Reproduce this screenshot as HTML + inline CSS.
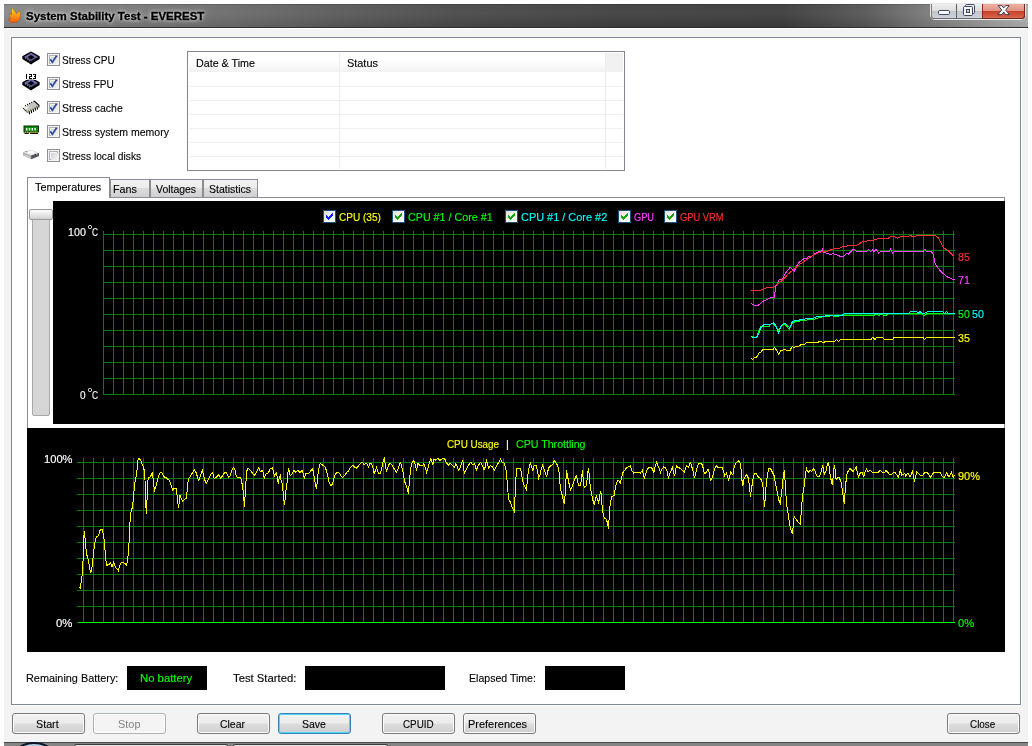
<!DOCTYPE html>
<html><head><meta charset="utf-8"><title>System Stability Test - EVEREST</title><style>
html,body{margin:0;padding:0}
body{width:1032px;height:746px;background:#fff;position:relative;overflow:hidden;font-family:"Liberation Sans",sans-serif;font-size:11px;color:#000}
.a{position:absolute}
.t{position:absolute;white-space:nowrap;line-height:14px;height:14px;transform-origin:0 0;font-size:11px}
.b{font-weight:bold}
#tb{left:4px;top:4px;width:1024px;height:23px;box-shadow:inset 0 1px 0 rgba(0,0,0,.15);background:linear-gradient(rgba(255,255,255,.04),rgba(255,255,255,.06) 40%,rgba(0,0,0,.05) 100%),linear-gradient(to right,#878787 0%,#7c7c7c 10%,#6a6a6a 22%,#595959 32%,#484848 44%,#3e3e3e 60%,#3b3b3b 76%,#545454 84%,#7e7e7e 91%,#9a9a9a 96%,#adadad 100%)}
#tbl{left:4px;top:27px;width:1024px;height:1px;background:#2e2e2e}
#cl{left:4px;top:29px;width:1024px;height:713px;background:#f3f3f3}
#pn{left:11px;top:37px;width:1010px;height:668px;background:#fff;border:1px solid #828796;box-sizing:border-box;box-shadow:1px 1px 0 #fff}
.btn{position:absolute;top:713px;width:73px;height:21px;box-sizing:border-box;border:1px solid #7a7a7a;border-radius:3px;background:linear-gradient(#f2f2f2 0%,#ebebeb 48%,#dddddd 52%,#cfcfcf 100%);box-shadow:inset 0 0 0 1px #fcfcfc}
.btn.dis{border-color:#adb2b5;background:#f4f4f4;box-shadow:inset 0 0 0 1px #fcfcfc}
.btn.def{border-color:#3c7fb1;box-shadow:inset 0 0 0 1px #48d8fb}
.cb{position:absolute;width:13px;height:13px;box-sizing:border-box;border:1px solid #8e8f8f;background:#f4f4f4;box-shadow:inset 0 0 0 1px #f4f4f4, inset 0 0 0 2px #aeb3b9;}
.cb i{position:absolute;left:3px;top:3px;width:7px;height:7px;background:linear-gradient(135deg,#d1d4d8,#f4f5f6)}
.lcb{position:absolute;width:13px;height:13px;top:210px;box-sizing:border-box;border:1px solid #1c5180;background:linear-gradient(135deg,#dcdcd7,#f3f3ef 50%,#fff 100%)}
.bk{position:absolute;background:#000}

</style></head><body>
<div class="a" id="tb"></div><div class="a" id="tbl"></div><div class="a" id="cl"></div>
<div class="a" id="pn"></div>
<div class="a" style="left:4px;top:742px;width:1024px;height:1px;background:#484848"></div>
<div class="a" style="left:4px;top:743px;width:1024px;height:3px;background:#858585"></div>
<div class="a" style="left:5.5px;top:741.6px;width:56px;height:56px;border-radius:50%;background:#b9cfe2;border:2.2px solid #0a1626;box-sizing:border-box"></div>
<div class="a" style="left:74px;top:744px;width:154px;height:4px;box-sizing:border-box;border:1px solid #3a3a3a;border-radius:2px;background:#e4e4e4"></div>
<div class="a" style="left:233px;top:744px;width:155px;height:4px;box-sizing:border-box;border:1px solid #3a3a3a;border-radius:2px;background:#e4e4e4"></div>

<div class="a" style="left:930px;top:3px;width:96px;height:17px;box-sizing:border-box;border:1px solid #e9e9e9;border-radius:0 0 5px 5px;background:#555"></div>
<div class="a" style="left:931px;top:4px;width:25px;height:15px;border-radius:0 0 0 4px;background:linear-gradient(#eeeeee 0%,#dedede 45%,#c2c5cc 50%,#cfd2d9 100%);box-shadow:inset 1px 0 0 #7a7a7a, inset 0 -1px 0 #6a6d78"></div>
<div class="a" style="left:956px;top:4px;width:1px;height:15px;background:#5d5f66"></div>
<div class="a" style="left:957px;top:4px;width:25px;height:15px;background:linear-gradient(#eeeeee 0%,#dedede 45%,#c2c5cc 50%,#cfd2d9 100%);box-shadow:inset 0 -1px 0 #6a6d78"></div>
<div class="a" style="left:982px;top:4px;width:43px;height:15px;border-radius:0 0 4px 0;background:linear-gradient(#eeb0a2 0%,#e09484 45%,#c8412b 50%,#d35f43 85%,#e08a62 100%);box-shadow:inset 1px 0 0 #8a2a1c, inset -1px 0 0 #7a2216, inset 0 -1px 0 #70241a"></div>
<svg class="a" style="left:930px;top:3px" width="96" height="18" viewBox="930 3 96 18">
<rect x="938.5" y="10.5" width="11" height="4" rx="1.2" fill="#f8f8f8" stroke="#3e4560" stroke-width="1"/>
<rect x="965.5" y="4.5" width="9" height="9" rx="1.2" fill="#eef0f3" stroke="#3e4560" stroke-width="1"/>
<rect x="963.5" y="6.5" width="9" height="9" rx="1.2" fill="#f8f8f8" stroke="#3e4560" stroke-width="1"/>
<rect x="966.5" y="9.5" width="3" height="3" fill="#d0d3da" stroke="#3e4560" stroke-width="1"/>
<path d="M998.2 5.6L1001.8 5.6L1003.7 7.9L1005.6 5.6L1009.2 5.6L1005.7 10L1009.4 14.6L1005.7 14.6L1003.7 12.1L1001.7 14.6L998 14.6L1001.7 10Z" fill="#fafafa" stroke="#3b3f55" stroke-width="1" stroke-linejoin="round"/>
</svg>


<svg class="a" style="left:0;top:0" width="60" height="170" viewBox="0 0 60 170">
<!-- flame -->
<defs><linearGradient id="fl" x1="0" y1="0" x2="0" y2="1"><stop offset="0" stop-color="#ffe61e"/><stop offset="0.45" stop-color="#ffa21a"/><stop offset="1" stop-color="#f25a0a"/></linearGradient></defs>
<path d="M12.2 7.6C13.5 10 15.6 11.4 16.4 14C17.6 13 18.6 11.6 19.4 10.6C20.6 13.5 21 17 19.4 19.8C17.8 22.4 14 23.3 11.3 22.2C9.4 21.5 8.4 20.3 8.7 18.6C9.4 19.3 10.2 19.3 10.6 18.8C9.6 16.8 9.4 15 10 13.4C10.6 14.2 11.2 14.8 11.8 15C11.2 12.5 11.4 10 12.2 7.6Z" fill="url(#fl)" stroke="#8a3a10" stroke-opacity=".55" stroke-width=".6"/>
<!-- cpu -->
<defs><clipPath id="cl2"><rect x="20" y="53.8" width="24" height="14"/></clipPath></defs>
<g id="chip">
<path d="M31 51.5L34 53L39.7 56.2L39.7 59L34 62.6L31 64.5L28 62.6L22.3 59L22.3 56.2L28 53Z" fill="#000"/>
<path d="M31 53L37.8 57L31 61.3L24.2 57Z" fill="#5c5c92"/>
<path d="M31 53L37.8 57L36 58L31 54.6L26 58L24.2 57Z" fill="#6d6da6"/>
<path d="M31 54.9L34.4 57.2L31 59.6L27.6 57.2Z" fill="#000"/>
<path d="M25 58L30.6 61.6" stroke="#c8c8e6" stroke-width=".8" stroke-dasharray="0.9 1.5"/>
</g>
<g clip-path="url(#cl2)" transform="translate(0,26)"><use href="#chip"/></g>
<!-- 123 -->
<path shape-rendering="crispEdges" fill="#000" d="M26 74h1v5h-1zM29 74h3v1h-3zM31 75h1v1h-1zM29 76h3v1h-3zM29 77h1v1h-1zM29 78h3v1h-3zM33 74h3v1h-3zM35 75h1v1h-1zM34 76h2v1h-2zM35 77h1v1h-1zM33 78h3v1h-3z"/>
<!-- cache chip -->
<path d="M23.2 108.2L34 101.4L38.8 105.6L27.8 112.8Z" fill="#c4c4c4"/>
<path d="M23.6 108.3L27 106.2L28.6 107.6L25.2 109.9Z" fill="#f2f2f2"/>
<path d="M23.2 108.2L27.8 112.9" stroke="#000" stroke-width="1.1" stroke-dasharray="1 .55"/>
<path d="M33.4 101.4H34.6L38.9 105.3V107.6" stroke="#000" stroke-width="1.1" fill="none"/>
<path d="M25.5 105.6h.01M27.6 104.4h.01M29.6 103.4h.01M31.7 102.4h.01" stroke="#000" stroke-width="1.3" stroke-linecap="round"/>
<path d="M25.6 106.6h.01M27.7 105.4h.01M29.7 104.4h.01M31.8 103.4h.01M28.6 110.6h.01M30.6 109.4h.01M32.6 108.2h.01M34.6 107h.01M36.6 105.9h.01" stroke="#b4a63a" stroke-width="1" stroke-linecap="round"/>
<path d="M29.2 111.6L29.6 113.8M31.1 110.4L31.6 112.6M33.1 109.2L33.6 111.5M35.1 108L35.6 110.2M37 106.9L37.5 109" stroke="#000" stroke-width="1.15" stroke-linecap="round"/>
<!-- memory -->
<rect x="24" y="126" width="14.5" height="6" fill="#0a8a0a" stroke="#0a2a0a" stroke-width="1"/>
<path d="M24.5 133.2H28.8M30.2 133.2H38" stroke="#111" stroke-width="1.6"/>
<path d="M25 132.2H28.5M30.5 132.2H37.6" stroke="#ffe600" stroke-width="1" stroke-dasharray="1.3 .7"/>
<path d="M26.7 128V130.6M29.5 128V130.6M32.3 128V130.6M35.1 128V130.6" stroke="#fff" stroke-width="1.4"/>
<!-- disk -->
<path d="M23 152L31 150.1L39 153L39 156L31.2 159.2L23 155.6Z" fill="#b3b3b6"/>
<path d="M23 152L31 150.1L39 153L31.2 155.5Z" fill="#e6e6e8"/>
<ellipse cx="31" cy="152.4" rx="3.4" ry="1.3" fill="#fbfbfb"/>
<ellipse cx="26.6" cy="151.6" rx="1.2" ry=".5" fill="#8c8c8c"/>
<path d="M31.2 155.5L39 153V156L31.2 159.2Z" fill="#54545e"/>
<path d="M24.5 155L29.8 157.3" stroke="#e4e4e4" stroke-width=".8"/>
<path d="M35.2 154.9L36 154.6" stroke="#15151c" stroke-width="1.3"/>
<path d="M36.4 154.7L37.4 154.3" stroke="#b8b8ff" stroke-width="1.3"/>
</svg>

<div class="a" style="left:187px;top:51px;width:438px;height:120px;box-sizing:border-box;border:1px solid #828790;background:#fff"></div>
<div class="a" style="left:189px;top:53px;width:434px;height:19px;background:linear-gradient(#fff 0%,#fff 40%,#f2f2f2 100%)"></div>
<div class="a" style="left:606px;top:53px;width:17px;height:19px;background:#f1f1f1"></div>
<div class="a" style="left:189px;top:86px;width:434px;height:1px;background:#f0f0f0"></div>
<div class="a" style="left:189px;top:100px;width:434px;height:1px;background:#f0f0f0"></div>
<div class="a" style="left:189px;top:114px;width:434px;height:1px;background:#f0f0f0"></div>
<div class="a" style="left:189px;top:128px;width:434px;height:1px;background:#f0f0f0"></div>
<div class="a" style="left:189px;top:142px;width:434px;height:1px;background:#f0f0f0"></div>
<div class="a" style="left:189px;top:156px;width:434px;height:1px;background:#f0f0f0"></div>
<div class="a" style="left:339px;top:53px;width:1px;height:116px;background:#ededed"></div>
<div class="a" style="left:605px;top:53px;width:1px;height:116px;background:#ededed"></div>
<div class="a" style="left:27px;top:197px;width:978px;height:455px;box-sizing:border-box;border:1px solid #898c95;background:#fff"></div>
<div class="a" style="left:110px;top:179px;width:40px;height:19px;box-sizing:border-box;border:1px solid #898c95;background:linear-gradient(#f2f2f2 0%,#ebebeb 50%,#dddddd 50%,#cfcfcf 100%)"></div>
<div class="a" style="left:150px;top:179px;width:53px;height:19px;box-sizing:border-box;border:1px solid #898c95;background:linear-gradient(#f2f2f2 0%,#ebebeb 50%,#dddddd 50%,#cfcfcf 100%)"></div>
<div class="a" style="left:203px;top:179px;width:55px;height:19px;box-sizing:border-box;border:1px solid #898c95;background:linear-gradient(#f2f2f2 0%,#ebebeb 50%,#dddddd 50%,#cfcfcf 100%)"></div>
<div class="a" style="left:27px;top:177px;width:83px;height:21px;box-sizing:border-box;border:1px solid #898c95;border-bottom:none;background:#fff"></div>
<div class="bk" style="left:53px;top:201px;width:952px;height:223px"></div>
<div class="bk" style="left:27px;top:428px;width:978px;height:224px"></div>
<div class="a" style="left:32px;top:212px;width:18px;height:204px;box-sizing:border-box;border:1px solid #a9a9a9;border-radius:2px;background:#d6d6d6"></div>
<div class="a" style="left:29px;top:209px;width:24px;height:11px;box-sizing:border-box;border:1px solid #9a9a9a;border-radius:2px;background:linear-gradient(#fdfdfd,#e3e3e3 60%,#d0d0d0)"></div>
<svg class="a" style="left:0;top:0" width="1032" height="746" viewBox="0 0 1032 746" shape-rendering="crispEdges">
<path d="M103.5 231V395M113.5 231V395M123.5 231V395M133.5 231V395M143.5 231V395M153.5 231V395M163.5 231V395M173.5 231V395M183.5 231V395M193.5 231V395M203.5 231V395M213.5 231V395M223.5 231V395M233.5 231V395M243.5 231V395M253.5 231V395M263.5 231V395M273.5 231V395M283.5 231V395M293.5 231V395M303.5 231V395M313.5 231V395M323.5 231V395M333.5 231V395M343.5 231V395M353.5 231V395M363.5 231V395M373.5 231V395M383.5 231V395M393.5 231V395M403.5 231V395M413.5 231V395M423.5 231V395M433.5 231V395M443.5 231V395M453.5 231V395M463.5 231V395M473.5 231V395M483.5 231V395M493.5 231V395M503.5 231V395M513.5 231V395M523.5 231V395M533.5 231V395M543.5 231V395M553.5 231V395M563.5 231V395M573.5 231V395M583.5 231V395M593.5 231V395M603.5 231V395M613.5 231V395M623.5 231V395M633.5 231V395M643.5 231V395M653.5 231V395M663.5 231V395M673.5 231V395M683.5 231V395M693.5 231V395M703.5 231V395M713.5 231V395M723.5 231V395M733.5 231V395M743.5 231V395M753.5 231V395M763.5 231V395M773.5 231V395M783.5 231V395M793.5 231V395M803.5 231V395M813.5 231V395M823.5 231V395M833.5 231V395M843.5 231V395M853.5 231V395M863.5 231V395M873.5 231V395M883.5 231V395M893.5 231V395M903.5 231V395M913.5 231V395M923.5 231V395M933.5 231V395M943.5 231V395M953.5 231V395M103 234.5H955M103 250.5H955M103 266.5H955M103 282.5H955M103 298.5H955M103 314.5H955M103 330.5H955M103 346.5H955M103 362.5H955M103 378.5H955M103 394.5H955M83.5 458V623M93.5 458V623M103.5 458V623M113.5 458V623M123.5 458V623M133.5 458V623M143.5 458V623M153.5 458V623M163.5 458V623M173.5 458V623M183.5 458V623M193.5 458V623M203.5 458V623M213.5 458V623M223.5 458V623M233.5 458V623M243.5 458V623M253.5 458V623M263.5 458V623M273.5 458V623M283.5 458V623M293.5 458V623M303.5 458V623M313.5 458V623M323.5 458V623M333.5 458V623M343.5 458V623M353.5 458V623M363.5 458V623M373.5 458V623M383.5 458V623M393.5 458V623M403.5 458V623M413.5 458V623M423.5 458V623M433.5 458V623M443.5 458V623M453.5 458V623M463.5 458V623M473.5 458V623M483.5 458V623M493.5 458V623M503.5 458V623M513.5 458V623M523.5 458V623M533.5 458V623M543.5 458V623M553.5 458V623M563.5 458V623M573.5 458V623M583.5 458V623M593.5 458V623M603.5 458V623M613.5 458V623M623.5 458V623M633.5 458V623M643.5 458V623M653.5 458V623M663.5 458V623M673.5 458V623M683.5 458V623M693.5 458V623M703.5 458V623M713.5 458V623M723.5 458V623M733.5 458V623M743.5 458V623M753.5 458V623M763.5 458V623M773.5 458V623M783.5 458V623M793.5 458V623M803.5 458V623M813.5 458V623M823.5 458V623M833.5 458V623M843.5 458V623M853.5 458V623M863.5 458V623M873.5 458V623M883.5 458V623M893.5 458V623M903.5 458V623M913.5 458V623M923.5 458V623M933.5 458V623M943.5 458V623M953.5 458V623M77 462.5H955M77 478.5H955M77 494.5H955M77 510.5H955M77 526.5H955M77 542.5H955M77 558.5H955M77 574.5H955M77 590.5H955M77 606.5H955M77 622.5H955" stroke="#008000" stroke-width="1" fill="none"/>
<path d="M79 622.5H955" stroke="#00ff00" stroke-width="1" fill="none"/>
</svg>
<svg class="a" style="left:0;top:0" width="1032" height="746" viewBox="0 0 1032 746">
<polyline points="751.2,336.5 756.3,337.5 759.1,330.3 761,326.6 763.8,326 769.4,326 771.3,323.8 774.1,324.2 776.9,328.5 778.8,330.3 781.6,325.7 784.4,323.8 787.3,326.6 789.1,329.4 792,323.8 794.8,321.9 799.5,321 807,320 813.4,319.5 818.2,317.8 823.9,316.6 831.4,315.9 837,316.3 842.7,315.3 860.0,315.2 874.1,315.2 876.9,313.9 878.8,315.8 880.6,313.9 885.3,315.8 888.1,313.9 908.8,313.9 921.9,313.9 923.8,315.8 926.6,313.9 954.7,313.9" fill="none" stroke="#00ff00" stroke-width="1" shape-rendering="crispEdges"/>
<polyline points="751.2,336.5 753.5,337.5 756.3,337.5 758.1,335 761,327.5 763.8,324.7 769.4,324.7 773.2,322.8 776,325.7 778.4,333.2 780.7,326.6 783.5,323.4 786.3,324.2 789.7,327.5 792.3,321.9 795.7,320.4 803.4,319.5 807,318.5 813.4,318.1 818.2,316.3 827.6,315.9 833.5,315 842.7,315 844.5,313.4 860.0,313.4 908.8,313.4 910.7,311.5 916.3,311.5 918.2,313.4 920.0,311.5 922.9,313.9 928.5,311.5 942.6,311.5 944.4,313.4 946.3,311.5 948.2,313.4 954.7,313.4" fill="none" stroke="#00ffff" stroke-width="1" shape-rendering="crispEdges"/>
<polyline points="751.2,358.5 752.5,359.5 754.4,357.6 756.6,357.2 759.1,352.9 761,351.9 762.8,349.7 773.2,349.7 774.7,347.2 776.9,351 778.8,354.2 780.7,350.4 784.4,349.7 787.3,350.4 790.1,350.4 792,346.7 794.2,347.2 796.6,346.3 799.5,345.9 801.3,344.4 804.2,344.4 807,342.2 818.2,342.2 820.1,341.2 822.4,342.2 833.3,341.2 835.1,341.2 836.6,339.5 838.3,341.4 840.8,339.5 860.0,339.4 871.3,339.4 872.8,337.2 875.0,339.4 876.9,337.2 882.5,337.2 884.4,339.4 892.8,339.4 894.3,337.2 922.9,337.2 924.4,339.4 926.6,337.2 954.7,337.2" fill="none" stroke="#ffff00" stroke-width="1" shape-rendering="crispEdges"/>
<polyline points="751.2,303.5 754.4,305.4 758.1,305.4 761.9,302.2 764.7,300.3 767.5,299.4 770.4,298 774.1,297.5 776,286.2 778.8,280.2 782.6,278.7 785.4,273.1 790.1,267.4 794.2,271.2 798.5,262.7 801.3,260.9 803.4,259 806,258.6 808.8,256.5 810.7,257.7 813.4,254.3 818.2,252 821.1,251.5 822.4,249 823.5,252.4 827.6,253.4 829.5,254.3 833.3,253.9 837,254.9 840.8,256.5 843.6,256.5 846.4,253.4 848.3,254.3 851.1,251.5 853,249.2 854.9,250 856.7,251.5 860.0,251.5 866.6,251.5 868.4,249.6 870.3,251.5 872.2,249.6 874.1,251.5 875.9,249.2 878.8,253.3 880.6,251.5 889.1,251.5 890.6,249.2 892.8,253.3 894.7,251.5 922.9,251.5 924.7,249.2 926.6,251.5 931.3,251.5 933.2,254.3 935.0,262.7 936.9,266.5 940.7,271.2 946.3,276.4 951.9,279.0 954.7,279.0" fill="none" stroke="#ff40ff" stroke-width="1" shape-rendering="crispEdges"/>
<polyline points="751.2,290.3 760,290.3 763.8,289 766.6,287.5 773.2,287.5 776,284.9 779.7,282.5 783.5,279.1 788.2,274 793.5,269.7 799.5,264.6 803.4,261.8 808.8,258 813.4,254.9 818.2,253 823.5,251.3 827.6,251.3 831.4,249.6 835.1,248.7 839.8,248.3 843.4,246.4 849.2,245.8 853.5,245.3 857.7,244.9 860.0,243.4 862.8,241.5 868.4,240.8 873.1,240.2 876.9,238.9 883.5,238.3 888.1,238.3 891.0,236.4 893.8,236.4 897.5,238.3 901.3,236.4 910.7,235.9 914.4,236.4 917.2,235.5 935.0,235.5 937.9,237.4 940.7,242.1 943.5,247.7 947.2,250.1 950.1,252.4 953.8,256.1" fill="none" stroke="#ff3030" stroke-width="1" shape-rendering="crispEdges"/>
<polyline points="79.4,587.1 80.6,588.3 81.4,578.7 82.2,574.7 82.6,562.6 83.4,559.6 83.6,542.5 84.2,531.4 85.1,538.5 85.5,544.5 86.7,554.6 88.3,559.6 89.5,566.6 90.3,572.7 91.5,570.7 92.7,561.6 93.5,552.6 94.5,545.5 95.5,539.5 96.7,536.5 98.7,535.5 99.9,530.4 101.1,529.4 102.5,530.0 103.4,535.5 104.4,541.5 105.2,552.6 105.8,559.6 106.8,565.2 109.2,564.6 110.4,562.6 112.0,566.6 113.6,562.2 115.2,566.6 116.8,569.0 118.4,570.7 119.6,565.6 121.2,562.6 123.3,562.6 124.9,563.6 126.5,565.2 127.7,559.6 128.5,550.5 129.3,538.5 129.7,526.4 130.5,516.4 131.3,510.3 132.5,507.3 133.3,498.3 134.1,490.2 134.9,482.2 136.1,476.1 137.3,468.1 138.1,459.0 139.3,458.4 141.0,461.1 142.6,465.1 144.2,470.1 145.0,480.2 145.4,490.2 145.8,504.3 146.4,514.3 147.0,500.3 147.4,486.2 148.2,478.2 149.8,477.1 151.4,475.1 152.2,472.5 153.0,478.2 153.8,485.2 154.6,490.2 155.8,487.2 157.0,482.2 158.2,477.1 159.5,473.7 161.1,472.1 162.3,473.1 163.5,476.1 164.7,477.1 165.9,477.1 167.5,479.2 169.1,480.2 170.3,482.2 171.5,486.2 172.7,490.2 173.9,488.6 175.5,488.2 176.3,488.6 177.2,496.2 178.0,504.3 178.4,508.3 179.2,503.3 180.0,495.2 181.2,498.3 182.4,501.3 183.6,500.3 185.2,498.9 186.4,498.3 187.2,490.2 188.0,482.2 188.8,478.2 190.0,477.1 191.6,474.1 193.2,471.7 194.4,470.1 195.7,471.7 196.9,475.1 198.1,479.2 198.9,480.2 200.5,476.1 201.7,472.1 202.5,470.1 203.3,474.1 204.5,479.2 205.0,480.5 206.4,483.2 208.4,479.2 210.4,475.1 212.5,472.4 213.4,475.1 214.2,478.5 216.5,477.1 218.6,475.1 220.6,477.8 222.6,475.8 224.7,472.4 226.4,472.4 227.4,474.4 228.7,477.5 230.5,475.1 231.9,470.4 233.5,467.4 234.6,468.3 235.9,474.4 236.9,477.1 240.0,477.5 241.4,479.8 242.3,485.3 243.3,492.1 243.9,499.5 244.5,506.7 245.0,497.5 245.6,488.0 246.1,479.8 246.5,471.7 248.1,468.3 249.8,469.7 251.8,472.4 254.5,475.5 256.6,471.7 258.6,467.6 260.4,471.7 262.7,470.4 263.6,475.1 264.4,477.8 266.1,473.7 268.5,472.8 270.1,469.0 272.2,468.0 273.5,471.7 274.5,475.8 276.2,472.8 277.2,476.5 278.3,483.6 279.3,477.1 280.3,475.1 281.2,481.2 282.3,483.9 283.0,490.7 283.7,497.5 284.4,504.7 285.3,497.5 286.1,489.3 286.9,483.9 287.5,477.1 288.0,471.7 288.4,468.3 289.1,470.4 290.2,475.8 291.8,474.1 293.9,470.4 295.9,472.4 297.9,470.4 300.0,472.4 302.4,470.4 303.4,475.1 304.3,477.8 306.1,473.1 308.1,473.7 310.1,471.7 312.2,468.7 313.3,471.0 314.2,477.1 315.2,483.2 316.5,488.7 317.1,482.6 317.6,477.1 318.3,471.7 319.2,467.0 320.3,463.3 321.9,464.7 323.7,465.6 325.1,467.0 326.4,470.4 327.8,476.5 329.1,481.9 330.9,485.5 332.5,483.9 333.9,478.5 335.2,474.4 337.3,472.4 339.3,473.1 341.3,476.5 342.7,477.5 345.0,475.1 346.6,472.4 348.4,471.4 350.4,467.6 352.5,465.2 354.5,467.0 356.5,468.3 358.6,465.6 361.0,462.9 362.6,462.5 364.3,464.9 366.0,462.9 367.4,464.2 368.7,467.4 370.1,462.9 371.5,463.6 372.8,467.6 374.2,473.3 375.5,470.4 376.5,467.4 377.6,471.0 378.9,473.7 380.5,473.3 381.6,469.0 382.7,463.6 383.7,459.8 384.3,458.8 385.2,463.6 386.0,469.0 386.5,472.4 387.7,467.6 389.1,464.2 390.4,463.3 392.2,464.9 393.8,468.3 395.5,471.0 396.6,472.4 398.2,468.3 399.5,464.2 400.6,462.5 401.7,467.0 402.7,470.4 403.6,475.8 404.7,481.9 406.3,485.3 407.7,490.0 408.5,493.7 409.0,486.6 409.6,479.8 410.4,470.4 411.5,464.2 412.8,461.5 413.9,460.6 414.9,463.6 415.8,467.0 416.6,470.4 418.0,463.6 419.3,464.9 421.0,465.6 422.6,465.6 424.0,463.6 425.3,467.6 426.7,472.4 428.0,467.6 429.4,462.2 430.7,458.8 431.8,461.5 432.9,464.9 434.0,458.8 435.6,460.2 437.9,458.4 440.0,460.6 442.4,458.4 444.7,458.8 446.1,462.2 448.4,465.2 450.1,463.3 452.2,465.2 454.2,467.4 456.0,463.6 457.3,467.0 458.7,470.4 460.3,467.0 461.7,462.9 462.8,460.6 463.6,467.6 464.4,473.3 466.0,470.4 467.8,466.3 469.5,463.6 470.9,462.5 472.5,464.9 474.6,463.6 476.3,470.1 478.0,466.3 479.6,463.3 480.9,462.5 482.7,466.3 484.1,469.7 485.0,467.6 486.4,460.6 487.4,463.6 488.8,468.3 490.4,465.6 492.5,467.0 494.2,470.4 495.9,467.0 497.9,463.6 499.7,460.6 500.6,458.8 502.0,462.2 504.0,462.9 505.4,467.0 506.4,472.4 507.0,479.8 507.5,487.3 508.1,493.4 508.7,499.5 510.5,502.2 512.1,507.0 514.2,511.3 514.8,501.6 515.4,489.3 515.9,478.5 516.5,469.0 518.2,468.3 520.5,468.7 521.6,474.4 522.7,481.2 524.3,486.0 526.4,490.0 527.3,481.2 528.1,473.1 529.1,467.0 530.4,462.9 531.8,467.6 532.8,470.4 534.1,465.6 536.3,465.2 537.6,471.7 538.7,478.2 539.9,475.1 541.3,469.0 542.7,465.2 544.0,469.0 545.4,473.1 546.7,477.1 547.7,471.7 548.8,467.6 550.8,465.6 552.6,464.9 554.2,460.6 555.5,462.2 557.2,464.9 558.5,468.3 559.3,474.4 559.9,482.6 560.7,490.0 562.1,494.8 563.4,500.2 564.4,504.3 565.0,496.1 565.6,486.6 566.1,477.1 566.7,470.4 567.5,475.8 568.8,482.6 570.5,490.0 572.1,486.6 573.9,481.2 575.6,477.1 576.6,475.8 577.5,480.5 578.6,485.3 580.5,485.5 581.6,478.5 582.4,470.4 583.2,478.5 584.3,488.0 586.1,486.0 587.0,479.8 587.8,473.1 588.4,468.3 589.2,474.4 589.7,481.2 590.5,488.0 591.5,494.1 592.9,500.2 594.2,504.3 595.6,498.8 596.5,495.4 597.6,500.2 598.7,502.9 599.6,496.1 600.6,490.7 601.4,496.1 601.9,504.3 602.8,511.7 603.7,516.5 605.1,518.5 606.4,519.2 607.5,523.3 608.5,529.4 609.0,520.5 609.5,509.7 610.5,501.6 611.8,496.8 614.2,495.4 615.2,489.3 616.3,483.2 617.7,480.5 619.0,481.2 620.4,483.2 621.3,478.5 622.7,473.1 624.1,471.0 625.0,469.7 627.0,467.6 629.1,466.3 630.4,465.6 631.8,470.4 633.8,473.3 635.9,472.0 638.6,472.0 640.2,473.3 642.4,470.4 643.3,474.4 644.3,477.8 645.6,474.4 647.0,470.4 648.7,467.4 650.8,467.4 652.4,469.0 653.8,472.4 655.1,467.0 656.5,462.5 657.8,465.2 659.2,468.7 660.5,472.4 661.9,469.0 663.7,467.0 665.4,467.4 666.8,470.4 668.4,477.5 670.0,473.1 671.4,469.7 672.5,467.6 673.6,472.4 674.7,475.8 675.5,470.4 676.6,465.6 678.2,467.6 680.4,468.3 682.3,470.4 684.2,472.4 685.4,468.3 686.7,466.0 688.5,467.0 689.8,463.6 690.7,462.5 691.7,466.3 692.8,470.4 694.5,478.2 695.5,474.4 696.6,469.7 698.0,465.2 698.9,463.3 701.0,463.3 702.3,464.9 703.4,469.0 704.5,473.7 706.4,472.4 708.0,468.7 709.1,472.4 710.5,480.5 711.8,478.5 713.2,474.4 714.5,469.0 716.2,465.2 717.9,467.6 720.0,467.4 722.4,467.6 723.5,471.7 724.7,475.5 726.5,473.1 727.6,476.5 728.8,480.5 729.7,475.8 730.8,472.0 732.9,475.1 733.8,469.0 734.9,464.9 736.5,462.2 738.3,460.6 739.6,462.2 740.6,464.9 741.4,472.4 741.9,479.8 742.8,486.0 743.7,479.8 745.1,476.5 746.4,475.1 747.8,476.5 748.7,480.5 749.5,486.6 750.5,496.8 751.4,489.3 752.5,482.6 753.3,476.5 754.6,473.3 756.3,473.7 757.7,476.5 759.6,477.8 761.3,479.8 762.7,483.9 763.4,490.7 764.1,501.6 764.5,507.0 765.0,500.9 765.7,490.7 766.6,481.2 767.7,473.1 768.8,468.3 770.4,468.3 772.1,471.7 774.2,475.8 775.6,483.9 777.2,492.1 778.6,499.5 780.2,503.2 781.3,494.8 782.4,485.3 783.3,475.8 784.3,470.4 785.1,481.2 785.9,494.8 787.0,507.0 788.7,517.8 790.5,528.7 792.4,534.4 793.2,526.0 794.2,516.5 796.5,519.9 798.6,522.6 800.3,524.3 801.1,513.8 801.9,502.9 803.0,493.4 804.3,485.3 805.4,474.4 806.5,468.3 808.1,472.4 810.0,470.4 811.8,471.7 813.8,468.3 815.5,472.4 817.2,476.5 819.0,477.1 820.6,473.7 821.7,469.0 822.7,465.2 823.6,470.4 824.4,474.4 825.8,471.7 827.1,465.6 828.2,462.5 829.3,467.6 830.1,474.4 831.2,480.5 832.3,485.3 833.1,477.1 833.9,469.0 834.5,465.2 835.3,470.4 836.1,479.8 837.6,477.8 839.3,477.8 841.0,481.9 842.3,489.3 843.4,497.5 844.4,504.3 845.0,493.4 845.9,482.6 846.7,475.1 848.4,470.4 850.2,468.3 851.8,470.4 853.2,471.7 854.8,469.0 856.2,467.4 857.3,472.4 858.6,476.5 860.2,473.1 862.0,472.4 863.8,476.5 865.1,471.7 866.5,468.7 868.1,471.7 870.1,470.4 872.2,472.4 878.3,472.4 880.3,470.4 882.4,472.4 884.1,473.1 886.0,470.4 887.8,472.4 889.5,474.4 891.2,475.1 893.2,472.8 895.2,472.4 896.9,475.1 898.2,477.1 899.3,473.7 900.4,470.4 901.8,475.1 903.4,474.4 905.0,473.7 905.4,476.4 906.8,474.3 908.4,473.3 910.0,477.1 911.4,473.7 912.5,470.5 913.3,475.7 914.4,481.4 915.2,478.4 915.9,475.7 916.8,472.3 918.6,473.7 920.6,475.4 923.1,475.0 924.7,472.3 927.4,472.3 928.8,475.0 930.8,477.3 932.2,474.3 934.2,472.3 936.2,473.0 938.3,472.3 939.9,472.3 941.7,475.4 943.0,477.3 944.4,477.3 945.7,474.3 946.7,472.3 948.0,475.4 949.1,477.1 950.5,474.3 951.3,472.3 952.5,475.7 953.5,477.3 954.5,475.4" fill="none" stroke="#ffff00" stroke-width="1" shape-rendering="crispEdges"/>
</svg>
<div class="a" style="left:88px;top:225px;width:4px;height:4px;box-sizing:border-box;border:1px solid #fff;border-radius:1.5px"></div>
<div class="a" style="left:88px;top:388px;width:4px;height:4px;box-sizing:border-box;border:1px solid #fff;border-radius:1.5px"></div>
<div class="lcb" style="left:323px"><svg width="11" height="11" viewBox="0 0 11 11" style="position:absolute;left:0;top:0" shape-rendering="crispEdges"><path d="M2 4h1v3h-1zM3 5h1v3h-1zM4 6h1v3h-1zM5 5h1v3h-1zM6 4h1v3h-1zM7 3h1v3h-1zM8 2h1v3h-1z" fill="#0a24ff"/></svg></div>
<div class="lcb" style="left:392px"><svg width="11" height="11" viewBox="0 0 11 11" style="position:absolute;left:0;top:0" shape-rendering="crispEdges"><path d="M2 4h1v3h-1zM3 5h1v3h-1zM4 6h1v3h-1zM5 5h1v3h-1zM6 4h1v3h-1zM7 3h1v3h-1zM8 2h1v3h-1z" fill="#18a318"/></svg></div>
<div class="lcb" style="left:505px"><svg width="11" height="11" viewBox="0 0 11 11" style="position:absolute;left:0;top:0" shape-rendering="crispEdges"><path d="M2 4h1v3h-1zM3 5h1v3h-1zM4 6h1v3h-1zM5 5h1v3h-1zM6 4h1v3h-1zM7 3h1v3h-1zM8 2h1v3h-1z" fill="#18a318"/></svg></div>
<div class="lcb" style="left:618px"><svg width="11" height="11" viewBox="0 0 11 11" style="position:absolute;left:0;top:0" shape-rendering="crispEdges"><path d="M2 4h1v3h-1zM3 5h1v3h-1zM4 6h1v3h-1zM5 5h1v3h-1zM6 4h1v3h-1zM7 3h1v3h-1zM8 2h1v3h-1z" fill="#18a318"/></svg></div>
<div class="lcb" style="left:664px"><svg width="11" height="11" viewBox="0 0 11 11" style="position:absolute;left:0;top:0" shape-rendering="crispEdges"><path d="M2 4h1v3h-1zM3 5h1v3h-1zM4 6h1v3h-1zM5 5h1v3h-1zM6 4h1v3h-1zM7 3h1v3h-1zM8 2h1v3h-1z" fill="#18a318"/></svg></div>
<div class="cb" style="left:47px;top:53px"><i></i>
<svg width="11" height="11" viewBox="0 0 11 11" style="position:absolute;left:0;top:0"><path d="M2.2 5.2L4.4 8.2L8.6 1.8" stroke="#31489c" stroke-width="1.7" fill="none"/></svg>
</div>
<div class="cb" style="left:47px;top:77px"><i></i>
<svg width="11" height="11" viewBox="0 0 11 11" style="position:absolute;left:0;top:0"><path d="M2.2 5.2L4.4 8.2L8.6 1.8" stroke="#31489c" stroke-width="1.7" fill="none"/></svg>
</div>
<div class="cb" style="left:47px;top:101px"><i></i>
<svg width="11" height="11" viewBox="0 0 11 11" style="position:absolute;left:0;top:0"><path d="M2.2 5.2L4.4 8.2L8.6 1.8" stroke="#31489c" stroke-width="1.7" fill="none"/></svg>
</div>
<div class="cb" style="left:47px;top:125px"><i></i>
<svg width="11" height="11" viewBox="0 0 11 11" style="position:absolute;left:0;top:0"><path d="M2.2 5.2L4.4 8.2L8.6 1.8" stroke="#31489c" stroke-width="1.7" fill="none"/></svg>
</div>
<div class="cb" style="left:47px;top:149px"><i></i>
</div>
<div class="bk" style="left:127px;top:666px;width:80px;height:24px"></div>
<div class="bk" style="left:305px;top:666px;width:140px;height:24px"></div>
<div class="bk" style="left:545px;top:666px;width:80px;height:24px"></div>
<div class="btn" style="left:12px"></div>
<div class="btn dis" style="left:93px"></div>
<div class="btn" style="left:197px"></div>
<div class="btn def" style="left:278px"></div>
<div class="btn" style="left:382px"></div>
<div class="btn" style="left:463px"></div>
<div class="btn" style="left:947px"></div>
<div class="a" style="left:0;top:0;width:1032px;height:746px;will-change:transform">
<div class="t b" style="left:25.70px;top:9px;color:#000;transform:scaleX(1.0433);-webkit-text-stroke:0.3px;text-shadow:0 0 3px rgba(255,255,255,.75),0 0 5px rgba(255,255,255,.6),0 0 7px rgba(255,255,255,.35);">System Stability Test - EVEREST</div>
<div class="t" style="left:62.30px;top:53px;color:#000;transform:scaleX(0.9211);-webkit-text-stroke:0.12px;">Stress CPU</div>
<div class="t" style="left:62.30px;top:77px;color:#000;transform:scaleX(0.9196);-webkit-text-stroke:0.12px;">Stress FPU</div>
<div class="t" style="left:62.30px;top:101px;color:#000;transform:scaleX(0.9556);-webkit-text-stroke:0.12px;">Stress cache</div>
<div class="t" style="left:62.30px;top:125px;color:#000;transform:scaleX(0.9562);-webkit-text-stroke:0.12px;">Stress system memory</div>
<div class="t" style="left:62.30px;top:149px;color:#000;transform:scaleX(0.9318);-webkit-text-stroke:0.12px;">Stress local disks</div>
<div class="t" style="left:196.43px;top:56px;color:#000;transform:scaleX(0.9746);-webkit-text-stroke:0.12px;">Date &amp; Time</div>
<div class="t" style="left:347.40px;top:56px;color:#000;transform:scaleX(0.9903);-webkit-text-stroke:0.12px;">Status</div>
<div class="t" style="left:35.10px;top:180px;color:#000;transform:scaleX(0.9851);-webkit-text-stroke:0.12px;">Temperatures</div>
<div class="t" style="left:112.72px;top:182px;color:#000;transform:scaleX(0.9783);-webkit-text-stroke:0.12px;">Fans</div>
<div class="t" style="left:156.00px;top:182px;color:#000;transform:scaleX(0.9500);-webkit-text-stroke:0.12px;">Voltages</div>
<div class="t" style="left:209.00px;top:182px;color:#000;transform:scaleX(0.9545);-webkit-text-stroke:0.12px;">Statistics</div>
<div class="t" style="left:339.00px;top:210px;color:#ffff00;transform:scaleX(0.9130);-webkit-text-stroke:0.16px;">CPU (35)</div>
<div class="t" style="left:408.20px;top:210px;color:#00ff00;transform:scaleX(0.9747);-webkit-text-stroke:0.16px;">CPU #1 / Core #1</div>
<div class="t" style="left:521.00px;top:210px;color:#00ffff;transform:scaleX(0.9931);-webkit-text-stroke:0.16px;">CPU #1 / Core #2</div>
<div class="t" style="left:634.20px;top:210px;color:#ff40ff;transform:scaleX(0.8391);-webkit-text-stroke:0.16px;">GPU</div>
<div class="t" style="left:680.20px;top:210px;color:#ff3030;transform:scaleX(0.8451);-webkit-text-stroke:0.16px;">GPU VRM</div>
<div class="t" style="left:67.73px;top:225px;color:#fff;transform:scaleX(0.9706);-webkit-text-stroke:0.16px;">100</div>
<div class="t" style="left:91.90px;top:225px;color:#fff;transform:scaleX(0.7500);-webkit-text-stroke:0.16px;">C</div>
<div class="t" style="left:79.80px;top:388px;color:#fff;transform:scaleX(0.9167);-webkit-text-stroke:0.16px;">0</div>
<div class="t" style="left:91.90px;top:388px;color:#fff;transform:scaleX(0.7500);-webkit-text-stroke:0.16px;">C</div>
<div class="t" style="left:43.69px;top:452px;color:#fff;transform:scaleX(1.0148);-webkit-text-stroke:0.16px;">100%</div>
<div class="t" style="left:55.70px;top:616px;color:#fff;transform:scaleX(1.0312);-webkit-text-stroke:0.16px;">0%</div>
<div class="t" style="left:957.60px;top:250px;color:#ff3030;transform:scaleX(0.9667);-webkit-text-stroke:0.16px;">85</div>
<div class="t" style="left:957.60px;top:273px;color:#ff40ff;transform:scaleX(0.9667);-webkit-text-stroke:0.16px;">71</div>
<div class="t" style="left:957.60px;top:307px;color:#00ff00;transform:scaleX(0.9667);-webkit-text-stroke:0.16px;">50</div>
<div class="t" style="left:972.00px;top:307px;color:#00ffff;transform:scaleX(0.9667);-webkit-text-stroke:0.16px;">50</div>
<div class="t" style="left:957.60px;top:331px;color:#ffff00;transform:scaleX(0.9667);-webkit-text-stroke:0.16px;">35</div>
<div class="t" style="left:958.00px;top:469px;color:#ffff00;-webkit-text-stroke:0.16px;">90%</div>
<div class="t" style="left:957.80px;top:616px;color:#00ff00;transform:scaleX(1.0188);-webkit-text-stroke:0.16px;">0%</div>
<div class="t" style="left:446.90px;top:437px;color:#ffff00;transform:scaleX(0.8966);-webkit-text-stroke:0.16px;">CPU Usage</div>
<div class="t" style="left:506.00px;top:437px;color:#fff;-webkit-text-stroke:0.16px;">|</div>
<div class="t" style="left:515.80px;top:437px;color:#00ff00;transform:scaleX(0.9662);-webkit-text-stroke:0.16px;">CPU Throttling</div>
<div class="t" style="left:25.51px;top:671px;color:#000;transform:scaleX(0.9870);-webkit-text-stroke:0.12px;">Remaining Battery:</div>
<div class="t" style="left:139.57px;top:671px;color:#00ff00;transform:scaleX(1.0280);-webkit-text-stroke:0.16px;">No battery</div>
<div class="t" style="left:233.00px;top:671px;color:#000;transform:scaleX(1.0262);-webkit-text-stroke:0.12px;">Test Started:</div>
<div class="t" style="left:469.44px;top:671px;color:#000;transform:scaleX(0.9603);-webkit-text-stroke:0.12px;">Elapsed Time:</div>
<div class="t" style="left:35.50px;top:717px;color:#000;transform:scaleX(0.9750);-webkit-text-stroke:0.12px;">Start</div>
<div class="t" style="left:220.30px;top:717px;color:#000;transform:scaleX(0.9500);-webkit-text-stroke:0.12px;">Clear</div>
<div class="t" style="left:301.70px;top:717px;color:#000;transform:scaleX(0.9560);-webkit-text-stroke:0.12px;">Save</div>
<div class="t" style="left:402.90px;top:717px;color:#000;transform:scaleX(0.8941);-webkit-text-stroke:0.12px;">CPUID</div>
<div class="t" style="left:468.40px;top:717px;color:#000;transform:scaleX(0.9966);-webkit-text-stroke:0.12px;">Preferences</div>
<div class="t" style="left:969.90px;top:717px;color:#000;transform:scaleX(0.9000);-webkit-text-stroke:0.12px;">Close</div>
<div class="t" style="left:117.50px;top:717px;color:#838383;transform:scaleX(0.9955);">Stop</div>
</div>
</body></html>
